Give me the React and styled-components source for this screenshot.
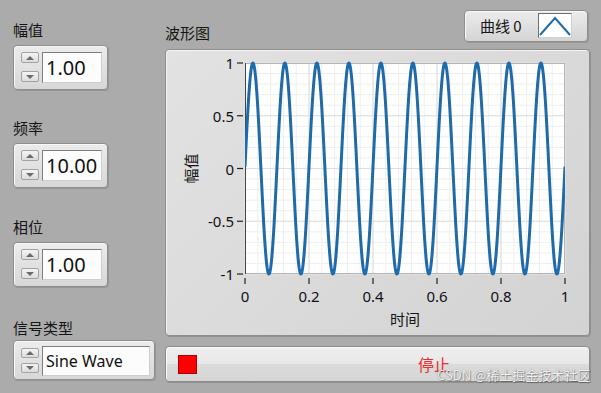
import React from "react";
import styled, { createGlobalStyle } from "styled-components";

const GlobalStyle = createGlobalStyle`
  html, body { margin: 0; padding: 0; }
  body {
    background: #ababab;
    font-family: "Noto Sans", "Noto Sans CJK SC", sans-serif;
    color: #111;
  }
`;

const CJK = `"Noto Sans CJK SC", "Noto Sans", sans-serif`;

const Page = styled.div`
  position: relative;
  width: 601px;
  height: 393px;
  box-sizing: border-box;
  padding: 10px 11px 0 13px;
  display: flex;
  overflow: hidden;
`;

const LeftCol = styled.div`
  width: 142px;
  padding-top: 10px;
  display: flex;
  flex-direction: column;
`;

const Group = styled.div`
  display: flex;
  flex-direction: column;
  margin-top: ${(p) => p.$mt || 0}px;
`;

const Label = styled.div`
  font-family: ${CJK};
  font-size: 15px;
  line-height: 20px;
  height: 20px;
  color: #151515;
  margin-bottom: ${(p) => (p.$mb != null ? p.$mb : 5)}px;
  white-space: nowrap;
`;

const Control = styled.div`
  box-sizing: border-box;
  width: ${(p) => p.$w}px;
  height: ${(p) => p.$h}px;
  border: 1px solid #8e8e8e;
  border-radius: 4px;
  background: linear-gradient(#ececec, #d7d7d7);
  box-shadow: 1px 1px 0 rgba(0, 0, 0, 0.12), inset 1px 1px 0 #f8f8f8;
  display: flex;
  align-items: flex-start;
  padding: ${(p) => p.$pad};
  gap: 3px;
`;

const Spinner = styled.div`
  width: 18px;
  height: ${(p) => p.$h}px;
  box-sizing: border-box;
  padding: ${(p) => p.$pad || "0"};
  display: flex;
  flex-direction: column;
  justify-content: space-between;
`;

const SpinBtn = styled.div`
  box-sizing: border-box;
  width: 18px;
  height: ${(p) => p.$h}px;
  border: 1px solid #a2a2a2;
  border-radius: 2px;
  background: linear-gradient(#f4f4f4, #dcdcdc);
  display: flex;
  align-items: center;
  justify-content: center;
`;

const Tri = styled.div`
  width: 0;
  height: 0;
  border-left: 4px solid transparent;
  border-right: 4px solid transparent;
  ${(p) =>
    p.$down
      ? "border-top: 4px solid #6a6a6a;"
      : "border-bottom: 4px solid #6a6a6a;"}
`;

const Field = styled.div`
  box-sizing: border-box;
  width: ${(p) => p.$w}px;
  height: ${(p) => p.$h}px;
  background: #fcfcfc;
  border: 1px solid #7e7e7e;
  border-right-color: #cfcfcf;
  border-bottom-color: #cfcfcf;
  font-family: "Noto Sans", sans-serif;
  font-size: ${(p) => p.$fs}px;
  line-height: ${(p) => p.$h - 2}px;
  padding-left: 3px;
  color: #111;
  white-space: nowrap;
  overflow: hidden;
`;

const RightCol = styled.div`
  width: 425px;
  margin-left: 10px;
  display: flex;
  flex-direction: column;
`;

const Header = styled.div`
  height: 32px;
  display: flex;
  justify-content: space-between;
`;

const HeaderLabel = styled.div`
  align-self: flex-end;
  font-family: ${CJK};
  font-size: 15px;
  line-height: 20px;
  margin-bottom: -1px;
  color: #151515;
`;

const Legend = styled.div`
  box-sizing: border-box;
  width: 124px;
  height: 32px;
  margin-right: 2px;
  border: 1px solid #8e8e8e;
  border-radius: 4px;
  background: linear-gradient(#ececec, #d4d4d4);
  box-shadow: 1px 1px 0 rgba(0, 0, 0, 0.12), inset 1px 1px 0 #f8f8f8;
  display: flex;
  align-items: center;
  padding: 0 15px 1px 15px;
`;

const LegendText = styled.span`
  font-family: ${CJK};
  font-size: 15px;
  color: #151515;
`;

const LegendSwatch = styled.div`
  margin-left: auto;
  width: 34px;
  height: 25px;
  box-sizing: border-box;
  background: #fff;
  border: 1px solid #6e6e6e;
  border-right-color: #d0d0d0;
  border-bottom-color: #d0d0d0;
  display: flex;
`;

const GraphPanel = styled.div`
  box-sizing: border-box;
  margin-top: 7px;
  width: 425px;
  height: 287px;
  border: 1px solid #8e8e8e;
  border-radius: 4px;
  background: linear-gradient(135deg, #e2e2e2, #d3d3d3);
  box-shadow: 1px 1px 0 rgba(0, 0, 0, 0.15), inset 1px 1px 0 #f4f4f4;
  display: flex;
`;

const StopButton = styled.div`
  box-sizing: border-box;
  margin-top: 10px;
  width: 425px;
  height: 36px;
  border: 1px solid #8c8c8c;
  border-radius: 4px;
  background: linear-gradient(#efefef 0%, #e8e8e8 48%, #dadada 52%, #d6d6d6 100%);
  box-shadow: 1px 1px 0 rgba(0, 0, 0, 0.15), inset 1px 1px 0 #fafafa;
  display: flex;
  align-items: center;
  padding-left: 12px;
`;

const StopSquare = styled.div`
  width: 19px;
  height: 19px;
  box-sizing: border-box;
  background: #ff0000;
  border: 1px solid #b00000;
`;

const StopText = styled.span`
  margin-left: 221px;
  font-family: ${CJK};
  font-size: 16px;
  color: #ec2c2c;
`;

const Watermark = styled.div`
  position: absolute;
  left: 437px;
  top: 367px;
  font-family: ${CJK};
  font-size: 13px;
  line-height: 16px;
  color: rgba(255, 255, 255, 0.9);
  text-shadow: 0 0 1px #777, 1px 1px 1px rgba(0, 0, 0, 0.35);
  white-space: nowrap;
`;

function NumericControl({ value }) {
  return (
    <Control $w={95} $h={45} $pad="6px 0 0 7px">
      <Spinner $h={31} $pad="0 0 1px 0">
        <SpinBtn $h={11}>
          <Tri />
        </SpinBtn>
        <SpinBtn $h={11}>
          <Tri $down />
        </SpinBtn>
      </Spinner>
      <Field $w={60} $h={31} $fs={20}>
        {value}
      </Field>
    </Control>
  );
}

function RingControl({ value }) {
  return (
    <Control $w={142} $h={40} $pad="5px 0 0 7px">
      <Spinner $h={30} $pad="2px 0 3px 0">
        <SpinBtn $h={10}>
          <Tri />
        </SpinBtn>
        <SpinBtn $h={10}>
          <Tri $down />
        </SpinBtn>
      </Spinner>
      <Field $w={108} $h={30} $fs={16}>
        {value}
      </Field>
    </Control>
  );
}

// Chart geometry (SVG coords, 423 x 285)
const PX0 = 79;
const PX1 = 399;
const PY0 = 13;
const PY1 = 224;
const PW = PX1 - PX0;
const PH = PY1 - PY0;
const xOf = (t) => PX0 + t * PW;
const yOf = (v) => PY0 + ((1 - v) / 2) * PH;

function Chart() {
  const pts = [];
  const N = 1000;
  const ph = (1 * Math.PI) / 180;
  for (let i = 0; i <= N; i++) {
    const t = i / N;
    const v = Math.sin(2 * Math.PI * 10 * t + ph);
    pts.push(`${xOf(t).toFixed(2)},${yOf(v).toFixed(2)}`);
  }
  const minorX = [];
  for (let i = 0; i <= 25; i++) minorX.push(i / 25);
  const minorY = [];
  for (let i = 0; i <= 20; i++) minorY.push(-1 + i / 10);
  const majorX = [0, 0.2, 0.4, 0.6, 0.8, 1];
  const majorY = [1, 0.5, 0, -0.5, -1];
  const xLabels = ["0", "0.2", "0.4", "0.6", "0.8", "1"];
  const yLabels = ["1", "0.5", "0", "-0.5", "-1"];
  const font = '"Noto Sans", sans-serif';
  return (
    <svg width="423" height="285" viewBox="0 0 423 285">
      <defs>
        <clipPath id="plotclip">
          <rect x={PX0} y={PY0 - 2} width={PW} height={PH + 4} />
        </clipPath>
      </defs>
      <rect x={PX0} y={PY0} width={PW} height={PH} fill="#ffffff" />
      {minorX.map((t, i) => (
        <line key={"mx" + i} x1={xOf(t)} x2={xOf(t)} y1={PY0} y2={PY1} stroke="#eeeeee" strokeWidth="1" />
      ))}
      {minorY.map((v, i) => (
        <line key={"my" + i} x1={PX0} x2={PX1} y1={yOf(v)} y2={yOf(v)} stroke="#eeeeee" strokeWidth="1" />
      ))}
      {majorX.map((t, i) => (
        <line key={"Mx" + i} x1={xOf(t)} x2={xOf(t)} y1={PY0} y2={PY1} stroke="#dedede" strokeWidth="1" />
      ))}
      {majorY.map((v, i) => (
        <line key={"My" + i} x1={PX0} x2={PX1} y1={yOf(v)} y2={yOf(v)} stroke="#dedede" strokeWidth="1" />
      ))}
      <rect x={PX0 + 0.5} y={PY0 + 0.5} width={PW - 1} height={PH - 1} fill="none" stroke="#b4b4b4" />
      <line x1={PX0 + 0.5} x2={PX0 + 0.5} y1={PY0} y2={PY1} stroke="#444" />
      <polyline
        points={pts.join(" ")}
        fill="none"
        stroke="#1f6aa8"
        strokeWidth="3"
        strokeLinejoin="round"
        clipPath="url(#plotclip)"
      />
      {majorY.map((v, i) => (
        <g key={"yt" + i}>
          <line x1={71} x2={77} y1={yOf(v)} y2={yOf(v)} stroke="#222" strokeWidth="1.2" />
          <text x={68} y={yOf(v)} textAnchor="end" dominantBaseline="central" fontFamily={font} fontSize="15" fill="#111">
            {yLabels[i]}
          </text>
        </g>
      ))}
      {majorX.map((t, i) => (
        <g key={"xt" + i}>
          <line x1={xOf(t)} x2={xOf(t)} y1={228} y2={234} stroke="#222" strokeWidth="1.2" />
          <text x={xOf(t)} y={246} textAnchor="middle" dominantBaseline="central" fontFamily={font} fontSize="15" fill="#111">
            {xLabels[i]}
          </text>
        </g>
      ))}
      <text x={(PX0 + PX1) / 2} y={268} textAnchor="middle" dominantBaseline="central" fontFamily={CJK} fontSize="15" fill="#151515">
        时间
      </text>
      <text
        x={0}
        y={0}
        transform={`translate(24 ${(PY0 + PY1) / 2}) rotate(-90)`}
        textAnchor="middle"
        dominantBaseline="central"
        fontFamily={CJK}
        fontSize="15"
        fill="#151515"
      >
        幅值
      </text>
    </svg>
  );
}

function CaretIcon() {
  return (
    <svg width="32" height="23" viewBox="0 0 32 23">
      <polyline points="1,21 16,4 31,21" fill="none" stroke="#1f6aa8" strokeWidth="2" />
    </svg>
  );
}

export default function App() {
  return (
    <>
      <GlobalStyle />
      <Page>
        <LeftCol>
          <Group>
            <Label>幅值</Label>
            <NumericControl value="1.00" />
          </Group>
          <Group $mt={28}>
            <Label>频率</Label>
            <NumericControl value="10.00" />
          </Group>
          <Group $mt={29}>
            <Label>相位</Label>
            <NumericControl value="1.00" />
          </Group>
          <Group $mt={31}>
            <Label $mb={2}>信号类型</Label>
            <RingControl value="Sine Wave" />
          </Group>
        </LeftCol>
        <RightCol>
          <Header>
            <HeaderLabel>波形图</HeaderLabel>
            <Legend>
              <LegendText>曲线 0</LegendText>
              <LegendSwatch>
                <CaretIcon />
              </LegendSwatch>
            </Legend>
          </Header>
          <GraphPanel>
            <Chart />
          </GraphPanel>
          <StopButton>
            <StopSquare />
            <StopText>停止</StopText>
          </StopButton>
        </RightCol>
        <Watermark>CSDN @稀土掘金技术社区</Watermark>
      </Page>
    </>
  );
}
